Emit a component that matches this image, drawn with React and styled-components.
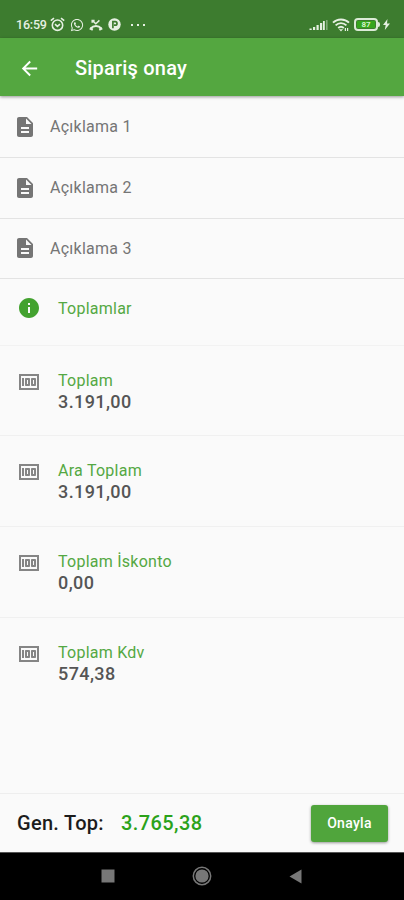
import React from "react";
import styled, { createGlobalStyle } from "styled-components";
import { MdArrowBack, MdDescription, MdInfo, MdMoney } from "react-icons/md";
import { FaWhatsapp } from "react-icons/fa";

const notes = ["Açıklama 1", "Açıklama 2", "Açıklama 3"];

const totals = [
  { label: "Toplam", value: "3.191,00", height: 90 },
  { label: "Ara Toplam", value: "3.191,00", height: 91 },
  { label: "Toplam İskonto", value: "0,00", height: 91 },
  { label: "Toplam Kdv", value: "574,38", height: 90 },
];

const AlarmIcon = () => (
  <svg width="15" height="15" viewBox="0 0 15 15" fill="none" stroke="currentColor" strokeWidth="1.6">
    <circle cx="7.5" cy="8.2" r="5.2" />
    <path d="M.8 3.7 4 1.2M14.2 3.7 11 1.2M5 7.2l2.4 2.2L10 7.2" />
  </svg>
);

const MissedCallIcon = () => (
  <svg width="14" height="12" viewBox="0 0 14 12" fill="none" stroke="currentColor">
    <path d="M3.2 1.4 6.8 4.8 10.4 1.4M3.2 3.8V1.4h2.4" strokeWidth="1.5" />
    <path d="M1.8 9.4C4.4 6.3 9.6 6.3 12.2 9.4" strokeWidth="2" />
    <path d="m.8 9.2 3 1.6M13.2 9.2l-3 1.6" strokeWidth="2.2" />
  </svg>
);

const ParkingIcon = () => (
  <svg width="13" height="13" viewBox="0 0 13 13">
    <circle cx="6.5" cy="6.5" r="6.2" fill="currentColor" />
    <path d="M4.9 10.2V3.6h2.3a1.8 1.8 0 0 1 0 3.6H6" fill="none" stroke="#3d7c2f" strokeWidth="1.7" />
  </svg>
);

const SignalIcon = () => (
  <svg width="19" height="12" viewBox="0 0 19 12" fill="currentColor">
    <path d="M.5 9.5h2.2V11H.5zM4 8h2.2v3H4zM7.5 6h2.2v5H7.5zM11 4h2.2v7H11z" />
    <path d="M14 2h1.8v9H14z" />
    <path d="M17 1h1.6v10H17z" opacity=".4" />
  </svg>
);

const WifiIcon = () => (
  <svg width="18" height="14" viewBox="0 0 18 14" fill="none" stroke="currentColor" strokeWidth="1.9">
    <path d="M1 4.7C5.2.4 12.8.4 17 4.7M3.6 7.4c3-3 7.8-3 10.8 0M6.2 10c1.7-1.5 3.9-1.5 5.6 0" />
    <path d="m7.4 11.4 1.6 1.8 1.6-1.8z" fill="currentColor" strokeWidth=".5" />
    <path d="M13.4 10v3M15.6 10v3" strokeWidth="1.2" />
  </svg>
);

const BoltIcon = () => (
  <svg width="7" height="11" viewBox="0 0 7 11" fill="currentColor">
    <path d="M4.5 0 0 6.1h2.7L1.8 11 7 4.5H4z" />
  </svg>
);

function App() {
  return (
    <>
      <GlobalStyle />
      <Screen>
        <StatusBar>
          <Clock>16:59</Clock>
          <StatusIcons>
            <AlarmIcon />
            <FaWhatsapp size={14} />
            <MissedCallIcon />
            <ParkingIcon />
          </StatusIcons>
          <Dots>
            <i />
            <i />
            <i />
          </Dots>
          <Device>
            <SignalIcon />
            <WifiIcon />
            <Battery>
              <span>87</span>
            </Battery>
            <BoltIcon />
          </Device>
        </StatusBar>

        <AppBar>
          <MdArrowBack size={23} />
          <Title>Sipariş onay</Title>
        </AppBar>

        <Content>
          {notes.map((note) => (
            <NoteRow key={note}>
              <MdDescription size={24} />
              <span>{note}</span>
            </NoteRow>
          ))}
          <SectionRow>
            <MdInfo size={24} />
            <Label>Toplamlar</Label>
          </SectionRow>
          {totals.map((total) => (
            <TotalRow key={total.label} height={total.height}>
              <MdMoney size={24} />
              <div>
                <Label>{total.label}</Label>
                <Value>{total.value}</Value>
              </div>
            </TotalRow>
          ))}
        </Content>

        <Footer>
          <GrandLabel>Gen. Top:</GrandLabel>
          <GrandValue>3.765,38</GrandValue>
          <ConfirmButton>Onayla</ConfirmButton>
        </Footer>

        <NavBar>
          <svg width="14" height="14">
            <rect x=".5" y=".5" width="13" height="13" fill="#777" />
          </svg>
          <svg width="20" height="20">
            <circle cx="10" cy="10" r="8.7" fill="none" stroke="#777" strokeWidth="1.5" />
            <circle cx="10" cy="10" r="6.6" fill="#777" />
          </svg>
          <svg width="13" height="15">
            <path d="M.5 7.5 12.5.5v14z" fill="#777" />
          </svg>
        </NavBar>
      </Screen>
    </>
  );
}

export default App;

const GlobalStyle = createGlobalStyle`
  * {
    box-sizing: border-box;
  }
  body {
    margin: 0;
    font-family: Roboto, sans-serif;
    background: #fafafa;
  }
  svg {
    flex: none;
    display: block;
  }
`;

const Screen = styled.div`
  width: 404px;
  height: 900px;
  display: flex;
  flex-direction: column;
  background: #fafafa;
  overflow: hidden;
`;

const StatusBar = styled.div`
  height: 38px;
  flex: none;
  display: flex;
  align-items: center;
  padding: 11px 14px 0 16px;
  background: #3d7c2f;
  color: #e6f0e2;
`;

const Clock = styled.span`
  width: 34px;
  font-size: 12.5px;
  font-weight: 500;
  line-height: 14px;
  letter-spacing: -0.2px;
`;

const StatusIcons = styled.div`
  display: flex;
  align-items: center;
  gap: 5px;
`;

const Dots = styled.div`
  display: flex;
  gap: 4px;
  margin-left: 10px;

  i {
    width: 2px;
    height: 2px;
    background: currentColor;
  }
`;

const Device = styled.div`
  display: flex;
  align-items: center;
  gap: 4px;
  margin-left: auto;
`;

const Battery = styled.div`
  position: relative;
  width: 24px;
  height: 13px;
  margin-right: 1px;
  padding: 1px;
  border: 2px solid #dcebd7;
  border-radius: 4px;

  span {
    display: block;
    height: 7px;
    background: #35a51c;
    color: #d5f3cb;
    font-size: 8px;
    font-weight: 700;
    line-height: 7px;
    text-align: center;
  }

  &:after {
    content: "";
    position: absolute;
    right: -4px;
    top: 2px;
    width: 2px;
    height: 5px;
    border-radius: 0 2px 2px 0;
    background: #dcebd7;
  }
`;

const AppBar = styled.header`
  height: 58px;
  flex: none;
  display: flex;
  align-items: center;
  padding: 2px 18px 0;
  background: #54a740;
  color: #fff;
  box-shadow: 0 1px 3px rgba(0, 0, 0, 0.4);
  z-index: 1;
`;

const Title = styled.h1`
  margin: 0 0 0 34px;
  font-size: 20px;
  font-weight: 500;
  letter-spacing: 0.2px;
`;

const Content = styled.main`
  flex: 1;
  min-height: 0;
  padding-top: 1px;
`;

const NoteRow = styled.div`
  height: 60.8px;
  display: flex;
  align-items: center;
  gap: 13px;
  padding: 0 13px;
  border-bottom: 1px solid #e3e3e3;
  color: #757575;
  font-size: 16px;
  letter-spacing: 0.25px;
`;

const SectionRow = styled.div`
  height: 67px;
  display: flex;
  padding: 17px 17px 0;
  border-bottom: 1px solid #f2f2f2;
  color: #43a22f;

  > div {
    line-height: 25px;
  }
`;

const TotalRow = styled.div`
  height: ${(props) => props.height}px;
  display: flex;
  padding: 24px 17px 0;
  border-bottom: 1px solid #f0f0f0;
  color: #858585;

  &:last-child {
    border-bottom: 0;
  }
`;

const Label = styled.div`
  margin-left: 17px;
  color: #54a843;
  font-size: 16px;
  line-height: 22px;
  letter-spacing: 0.25px;
`;

const Value = styled.div`
  margin-left: 17px;
  color: #555;
  font-size: 18px;
  font-weight: 500;
  line-height: 20px;
  letter-spacing: 0.4px;
`;

const Footer = styled.footer`
  height: 59px;
  flex: none;
  display: flex;
  align-items: center;
  padding: 0 16px 0 17px;
  border-top: 1px solid #eee;
`;

const GrandLabel = styled.span`
  width: 104px;
  color: #1c1c1c;
  font-size: 20px;
  font-weight: 500;
  letter-spacing: 0.3px;
`;

const GrandValue = styled.span`
  color: #2ba21a;
  font-size: 20px;
  font-weight: 500;
  letter-spacing: 0.4px;
`;

const ConfirmButton = styled.button`
  width: 77px;
  height: 37px;
  margin-left: auto;
  padding: 0;
  border: 0;
  border-radius: 3px;
  background: #50a53c;
  color: #fff;
  font-family: inherit;
  font-size: 14px;
  font-weight: 500;
  letter-spacing: 0.3px;
  box-shadow: 0 1px 3px rgba(0, 0, 0, 0.4);
`;

const NavBar = styled.nav`
  height: 48px;
  flex: none;
  display: flex;
  align-items: center;
  justify-content: space-between;
  padding: 0 102px 1px 101px;
  border-top: 1px solid #555;
  background: #000;
`;
